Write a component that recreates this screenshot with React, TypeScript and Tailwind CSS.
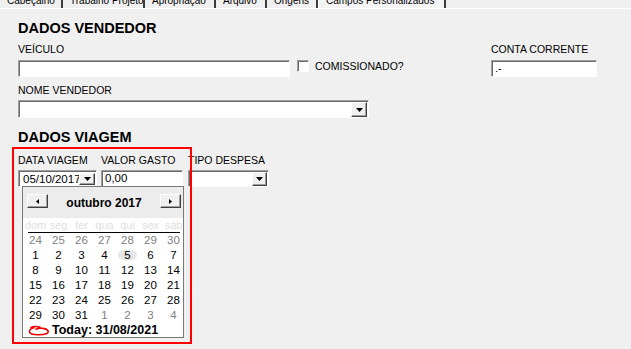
import React from 'react'

const sunken =
  'bg-white border border-t-[#a0a0a0] border-l-[#a0a0a0] border-r-white border-b-white shadow-[inset_1px_1px_0_#696969]'
const raised =
  'bg-[#f0f0f0] border border-t-white border-l-white border-r-[#404040] border-b-[#404040] shadow-[inset_-1px_-1px_0_#a0a0a0]'

const tabs = [
  { label: 'Cabeçalho', w: 'w-[63px]' },
  { label: 'Trabalho Projeto', w: 'w-[82px]' },
  { label: 'Apropriação', w: 'w-[71px]' },
  { label: 'Arquivo', w: 'w-[51px]' },
  { label: 'Origens', w: 'w-[51px]' },
  { label: 'Campos Personalizados', w: 'w-[128px]', active: true },
]

const dayNames = ['dom', 'seg', 'ter', 'qua', 'qui', 'sex', 'sáb']

// semanas de outubro 2017, muted = fora do mês
const weeks: { d: number; muted?: boolean }[][] = [
  [24, 25, 26, 27, 28, 29, 30].map(d => ({ d, muted: true })),
  [1, 2, 3, 4, 5, 6, 7].map(d => ({ d })),
  [8, 9, 10, 11, 12, 13, 14].map(d => ({ d })),
  [15, 16, 17, 18, 19, 20, 21].map(d => ({ d })),
  [22, 23, 24, 25, 26, 27, 28].map(d => ({ d })),
  [
    { d: 29 }, { d: 30 }, { d: 31 },
    { d: 1, muted: true }, { d: 2, muted: true }, { d: 3, muted: true }, { d: 4, muted: true },
  ],
]

function DownArrow() {
  return (
    <svg width="7" height="4" viewBox="0 0 7 4">
      <path d="M0 0h7L3.5 4z" fill="#000" />
    </svg>
  )
}

function DropButton({ className }: { className: string }) {
  return (
    <div className={`${raised} ${className} flex items-center justify-center`}>
      <DownArrow />
    </div>
  )
}

function Calendar() {
  return (
    <div className="absolute left-[22px] top-[186px] w-[162px] h-[152px] border border-[#7a7a7a] bg-white">
      {/* cabeçalho */}
      <div className="h-[31px] bg-[#ececec] flex items-start pt-[7px] pl-[4px] pr-[2px]">
        <div className={`${raised} w-[21px] h-[14px] flex items-center justify-center`}>
          <svg width="3" height="5" viewBox="0 0 3 5"><path d="M3 0v5L0 2.5z" fill="#000" /></svg>
        </div>
        <div className="flex-1 text-center text-[12px] font-bold leading-[14px] pt-[2px]">outubro 2017</div>
        <div className={`${raised} w-[21px] h-[14px] flex items-center justify-center`}>
          <svg width="3" height="5" viewBox="0 0 3 5"><path d="M0 0v5L3 2.5z" fill="#000" /></svg>
        </div>
      </div>
      {/* dias da semana */}
      <div className="h-[14px] grid grid-cols-[repeat(7,23px)] ml-px text-[11px] leading-[14px] text-[#e0e0e0]">
        {dayNames.map(n => (
          <span key={n} className="text-center">{n}</span>
        ))}
      </div>
      <div className="h-px bg-black ml-[5px] mr-[3px]" />
      <div className="ml-px">
        {weeks.map((week, i) => (
          <div key={i} className="grid grid-cols-[repeat(7,23px)] h-[15px] text-[11.5px] leading-[15px]">
            {week.map((c, j) => (
              <span
                key={j}
                className={`relative text-center ${c.muted ? 'text-[#808080]' : 'text-black'}`}
              >
                {!c.muted && c.d === 5 && (
                  <span className="absolute left-[2px] top-[2px] w-[19px] h-[10px] rounded-full bg-[#e6e6e6]" />
                )}
                <span className="relative">{c.d}</span>
              </span>
            ))}
          </div>
        ))}
      </div>
      <div className="h-[14px] flex items-center pl-[5px] gap-[2px]">
        <svg width="22" height="11" viewBox="0 0 22 11">
          <path
            d="M12 2.2 C9 1.4 5 1.5 3 2.4 M6 2.8 C2 3.4 0.8 6 2 8 C4 10.2 15 10.2 19 8.4 C21.5 6.8 20 4 15 3.4 C12 3 9 3.6 8 4.2"
            stroke="#ee0000"
            strokeWidth="1.6"
            fill="none"
            strokeLinecap="round"
          />
        </svg>
        <span className="text-[12.5px] font-bold leading-[14px]">Today: 31/08/2021</span>
      </div>
    </div>
  )
}

export default function App() {
  return (
    <div className="relative w-[631px] h-[349px] bg-[#f0f0f0] overflow-hidden text-black font-['Liberation_Sans',Arial,sans-serif]">
      {/* abas */}
      <div className="h-[8px] flex overflow-hidden">
        {tabs.map(t => (
          <div
            key={t.label}
            className={`${t.w} shrink-0 h-[8px] pl-[7px] overflow-hidden border-r-2 border-r-[#3c3c3c] ${t.active ? 'bg-[#f4f4f4] border-l border-l-white' : ''}`}
          >
            <div className="-mt-[5px] text-[10px] leading-[12px] whitespace-nowrap">{t.label}</div>
          </div>
        ))}
      </div>
      <div className="h-px bg-white" />

      <div className="px-[18px]">
        {/* DADOS VENDEDOR */}
        <h2 className="mt-[11px] text-[14.5px] font-bold leading-[17px]">DADOS VENDEDOR</h2>
        <div className="flex mt-[6px] items-start">
          <div className="w-[272px]">
            <div className="text-[10.5px] leading-[12px]">VEÍCULO</div>
            <div className={`${sunken} mt-[5px] h-[17px]`} />
          </div>
          <div className="ml-[7px] w-[194px] pt-[17px] flex items-start">
            <div className={`${sunken} w-[12px] h-[12px] shrink-0`} />
            <span className="ml-[6px] text-[10.5px] leading-[12px]">COMISSIONADO?</span>
          </div>
          <div>
            <div className="text-[10.5px] leading-[12px]">CONTA CORRENTE</div>
            <div className={`${sunken} mt-[5px] w-[106px] h-[17px] pl-[3px] text-[11px] leading-[14px]`}>.-</div>
          </div>
        </div>

        <div className="mt-[7px] text-[10.5px] leading-[12px]">NOME VENDEDOR</div>
        <div className={`${sunken} mt-[4px] w-[351px] h-[18px] flex justify-end items-start pt-px pr-px`}>
          <DropButton className="w-[16px] h-[15px]" />
        </div>

        {/* DADOS VIAGEM */}
        <h2 className="mt-[11px] text-[14.5px] font-bold leading-[17px]">DADOS VIAGEM</h2>
        <div className="flex mt-[8px] items-start">
          <div className="w-[79px]">
            <div className="text-[10.5px] leading-[12px] whitespace-nowrap">DATA VIAGEM</div>
            <div className={`${sunken} mt-[4px] h-[17px] flex items-center overflow-hidden`}>
              <span className="pl-[4px] w-[60px] shrink-0 overflow-hidden whitespace-nowrap text-[11.5px] leading-[14px]">
                05/10/2017
              </span>
              <DropButton className="w-[16px] h-[12px] shrink-0" />
            </div>
          </div>
          <div className="ml-[4px] w-[82px]">
            <div className="text-[10.5px] leading-[12px] whitespace-nowrap">VALOR GASTO</div>
            <div className={`${sunken} mt-[4px] h-[17px] pl-[3px] text-[11.5px] leading-[15px]`}>0,00</div>
          </div>
          <div className="ml-[5px] w-[81px]">
            <div className="text-[10.5px] leading-[12px] whitespace-nowrap">TIPO DESPESA</div>
            <div className={`${sunken} mt-[4px] h-[17px] flex justify-end items-start pt-px pr-px`}>
              <DropButton className="w-[15px] h-[14px]" />
            </div>
          </div>
        </div>
      </div>

      <Calendar />

      {/* marcação vermelha */}
      <div className="absolute left-[12px] top-[147px] w-[180px] h-[197px] border-2 border-[#ff0000] pointer-events-none" />
    </div>
  )
}
